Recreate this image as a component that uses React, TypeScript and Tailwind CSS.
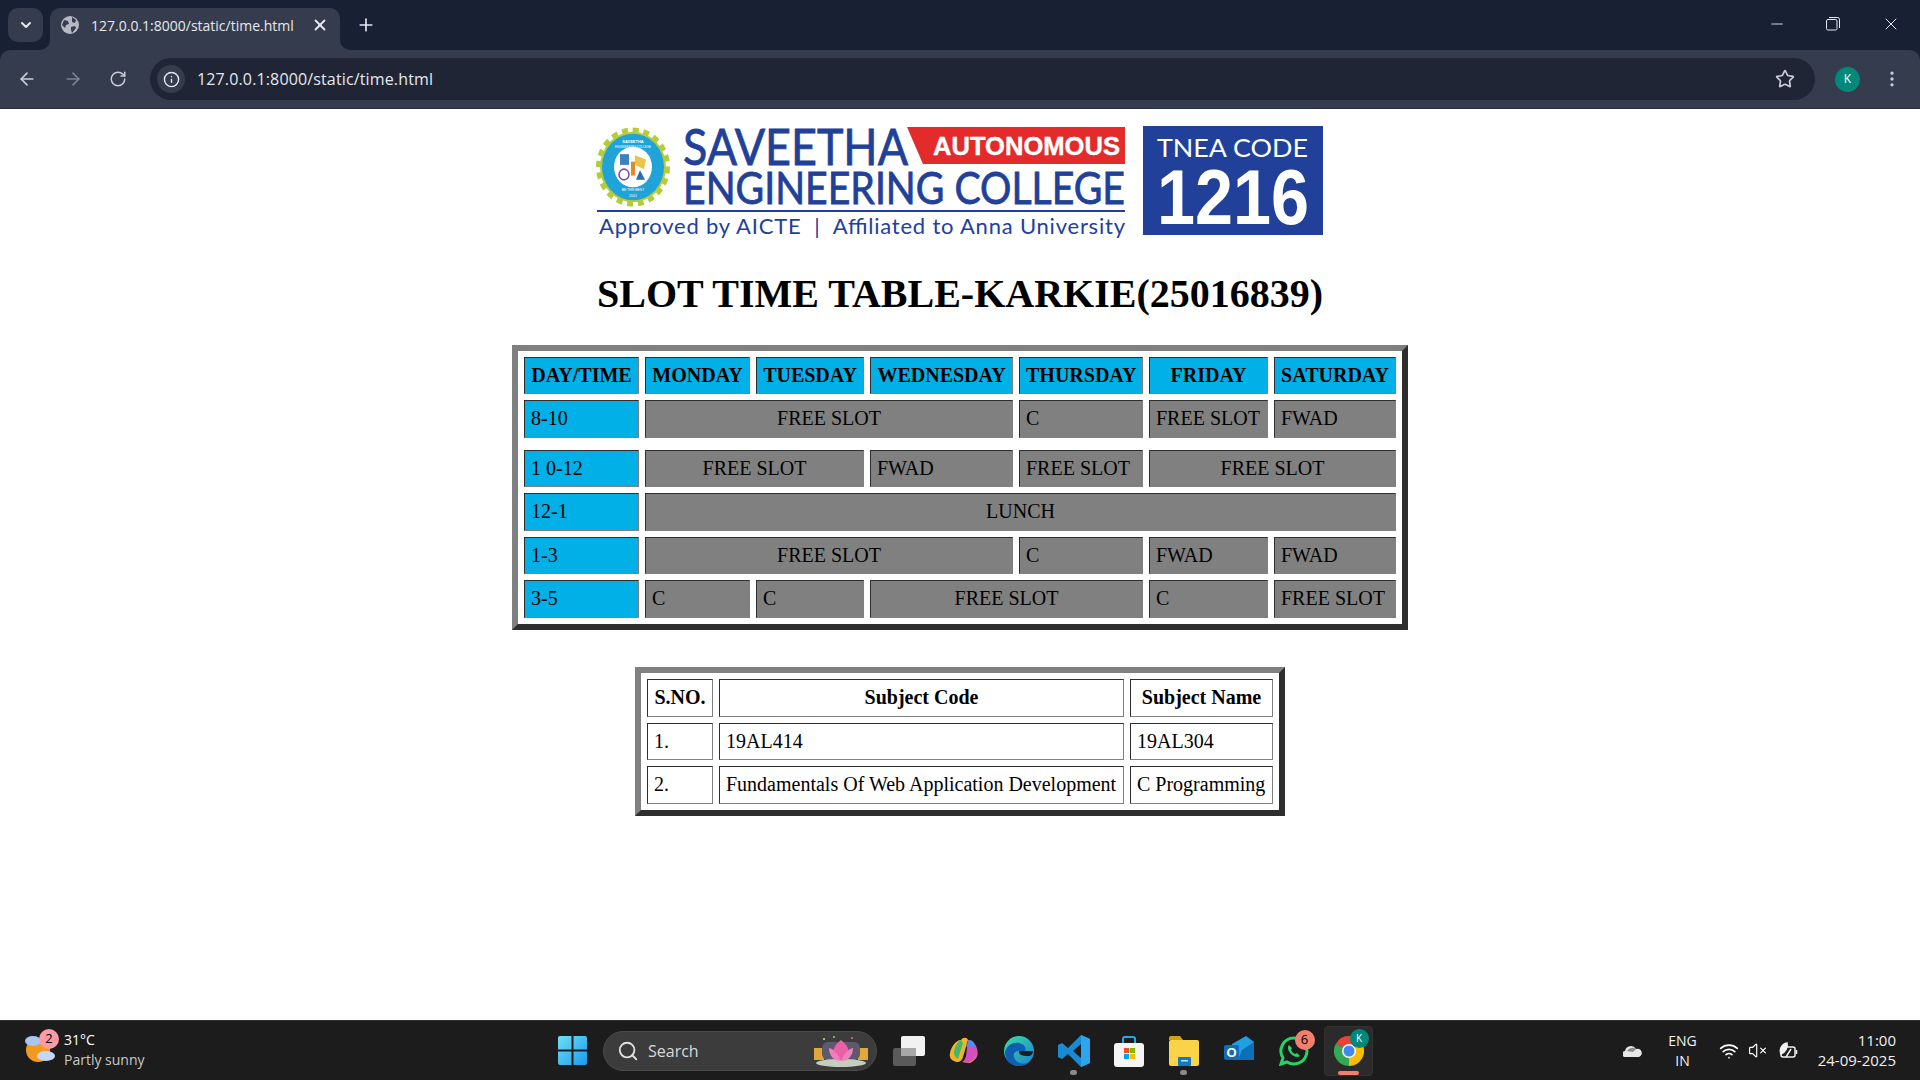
import { ArrowLeft, ArrowRight, ChevronDown, EllipsisVertical, Info, Minus, Plus, RotateCw, Search, Star, VolumeX, Wifi, X } from "lucide-react";
import { Fragment } from "react";
import type { ReactNode } from "react";

type Cell = { t: string; span?: number };
const rows: { label: string; cells: Cell[]; h: string }[] = [
  { label: "8-10", h: "h-[38px]", cells: [{ t: "FREE SLOT", span: 3 }, { t: "C" }, { t: "FREE SLOT" }, { t: "FWAD" }] },
  { label: "1 0-12", h: "h-[37px]", cells: [{ t: "FREE SLOT", span: 2 }, { t: "FWAD" }, { t: "FREE SLOT" }, { t: "FREE SLOT", span: 2 }] },
  { label: "12-1", h: "h-[38px]", cells: [{ t: "LUNCH", span: 6 }] },
  { label: "1-3", h: "h-[37px]", cells: [{ t: "FREE SLOT", span: 3 }, { t: "C" }, { t: "FWAD" }, { t: "FWAD" }] },
  { label: "3-5", h: "h-[38px]", cells: [{ t: "C" }, { t: "C" }, { t: "FREE SLOT", span: 2 }, { t: "C" }, { t: "FREE SLOT" }] },
];
const heads = ["DAY/TIME", "MONDAY", "TUESDAY", "WEDNESDAY", "THURSDAY", "FRIDAY", "SATURDAY"];
const cellBorder = "border border-t-[#2e2e2e] border-l-[#2e2e2e] border-r-[#808080] border-b-[#808080] px-[6px] pt-0 pb-[2px]";
const tableBorder = "border-[6px] border-t-[#808080] border-l-[#808080] border-r-[#2e2e2e] border-b-[#2e2e2e] border-separate border-spacing-[6px] table-fixed";

function Logo() {
  const blue = "#21409a";
  return (
    <svg width="730" height="118" viewBox="595 123 730 118" className="block">
      <g transform="translate(633 167) scale(1 1.07) translate(-633 -167)">
        <circle cx="633" cy="167" r="33" fill="#b5cc3a" />
        <circle cx="633" cy="167" r="34.500" fill="none" stroke="#b5cc3a" strokeWidth="5" strokeDasharray="6 4.800" />
        <circle cx="633" cy="167" r="31" fill="#1fa3d8" />
        <circle cx="633" cy="167" r="19" fill="#ffffff" />
        <rect x="620" y="155" width="9" height="10" fill="#3f7fc4" />
        <path d="M635 156l11 4-2 9-9-4z" fill="#e8c547" />
        <circle cx="624" cy="174" r="5" fill="none" stroke="#7a4ea3" strokeWidth="1.500" />
        <path d="M640 170l5 9h-9z" fill="#2b6cb0" />
        <rect x="631" y="162" width="4" height="13" fill="#e08a2b" />
      </g>
      <text x="633" y="143" textAnchor="middle" fontFamily="Liberation Sans" fontWeight="700" fontSize="4" fill="#ffffff">SAVEETHA</text>
      <text x="633" y="148" textAnchor="middle" fontFamily="Liberation Sans" fontSize="3" fill="#ffffff">ENGINEERING COLLEGE</text>
      <text x="633" y="191" textAnchor="middle" fontFamily="Liberation Sans" fontSize="3.500" fill="#ffffff">BE THE BEST</text>
      <text x="633" y="197" textAnchor="middle" fontFamily="Liberation Sans" fontSize="3.500" fill="#ffffff">2001</text>
      <text x="683" y="165" fontFamily="Lato" fontSize="50" fill={blue} stroke={blue} strokeWidth="0.8" textLength="225" lengthAdjust="spacingAndGlyphs">SAVEETHA</text>
      <polygon points="907,127 1125,127 1125,164 923,164" fill="#e32b2b" />
      <text x="933" y="155" fontFamily="Liberation Sans" fontWeight="700" fontSize="25" fill="#ffffff" stroke="#ffffff" strokeWidth="0.4" textLength="187" lengthAdjust="spacingAndGlyphs">AUTONOMOUS</text>
      <text x="683" y="204" fontFamily="Lato" fontSize="44" fill={blue} stroke={blue} strokeWidth="0.8" textLength="442" lengthAdjust="spacingAndGlyphs">ENGINEERING COLLEGE</text>
      <rect x="597" y="210" width="528" height="2" fill={blue} />
      <text x="599" y="234" fontFamily="Lato" fontSize="22" fill={blue} textLength="526" lengthAdjust="spacing" className="whitespace-pre">Approved by AICTE  |  Affiliated to Anna University</text>
      <rect x="1143" y="126" width="180" height="109" fill={blue} />
      <text x="1157" y="157" fontFamily="Lato" fontSize="25" fill="#ffffff" textLength="151" lengthAdjust="spacingAndGlyphs">TNEA CODE</text>
      <text x="1157" y="224" fontFamily="Liberation Sans" fontWeight="700" fontSize="78" fill="#ffffff" textLength="152" lengthAdjust="spacingAndGlyphs">1216</text>
    </svg>
  );
}

function TaskIcon({ children, dot, active }: { children: ReactNode; dot?: boolean; active?: boolean }) {
  return (
    <div className="relative w-[55px] h-[50px] flex items-center justify-center">
      {active && <span className="absolute inset-y-0 left-[3px] right-[3px] rounded bg-[#2b2b2b] border border-[#333333]" />}
      <span className="relative flex">{children}</span>
      {dot && <span className="absolute bottom-[1px] left-[24px] w-[7px] h-[5px] rounded-full bg-[#8a8a8a]" />}
      {active && <span className="absolute bottom-[1px] left-[17px] w-[21px] h-[4px] rounded-full bg-[#f0806e]" />}
    </div>
  );
}

function Badge({ n, cls }: { n: string; cls: string }) {
  return <span className={`absolute flex items-center justify-center rounded-full text-black text-[13px] ${cls}`}>{n}</span>;
}

export default function App() {
  return (
    <div className="w-[1920px] h-[1080px] flex flex-col overflow-hidden bg-white font-['Open_Sans',sans-serif]">
      <div className="bg-[#172133] shrink-0">
        <div className="h-[50px] flex items-end relative">
          <div className="absolute left-[8px] top-[8px] w-[35px] h-[34px] rounded-[10px] bg-[#353c4d] flex items-center justify-center text-[#e6e8ee]">
            <ChevronDown size={16} strokeWidth={3} />
          </div>
          <svg width="10" height="10" viewBox="0 0 10 10" className="absolute left-[40px] top-[40px]"><path d="M10 0A10 10 0 0 1 0 10H10Z" fill="#353c4d" /></svg>
          <svg width="10" height="10" viewBox="0 0 10 10" className="absolute left-[340px] top-[40px]"><path d="M0 0A10 10 0 0 0 10 10H0Z" fill="#353c4d" /></svg>
          <div className="ml-[50px] w-[290px] h-[42px] rounded-t-[10px] bg-[#353c4d] flex items-center pl-[11px] pb-[8px] text-[#e6e8ee]">
            <svg width="18" height="18" viewBox="0 0 18 18" className="shrink-0">
              <circle cx="9" cy="9" r="9" fill="#b5b9c4" />
              <path d="M3 4l4 1 1 3-3 1-1 3-3-3zM11 1l4 3-1 3-3-1zM10 11l4-1 1 2-4 5-1-3z" fill="#353c4d" />
            </svg>
            <span className="ml-[12px] text-[14px] w-[205px] whitespace-nowrap">127.0.0.1:8000/static/time.html</span>
            <X size={18} strokeWidth={2.5} className="ml-[15px]" />
          </div>
          <Plus size={20} className="ml-[16px] mb-[15px] text-[#e6e8ee]" />
          <div className="ml-auto flex items-center h-full text-[#e6e8ee] pb-[3px]">
            <Minus size={18} strokeWidth={1.2} className="mr-[40px]" />
            <svg width="14" height="14" viewBox="0 0 14 14" fill="none" stroke="currentColor" className="mr-[41px]">
              <rect x="0.5" y="2.5" width="10.5" height="10.5" rx="1.5" />
              <path d="M3 .5h8.5a2 2 0 0 1 2 2V11" />
            </svg>
            <X size={20} strokeWidth={1.2} className="mr-[19px]" />
          </div>
        </div>

        <div className="h-[59px] bg-[#353c4d] rounded-t-[10px] flex items-center text-[#c9cdd8] border-b border-[#2a3040]">
          <ArrowLeft size={20} className="ml-[17px]" />
          <ArrowRight size={20} className="ml-[26px] text-[#7d8290]" />
          <RotateCw size={18} className="ml-[26px]" />
          <div className="ml-[23px] w-[1665px] h-[42px] rounded-full bg-[#1f2535] flex items-center pl-[7px]">
            <div className="w-[28px] h-[28px] rounded-full bg-[#353c4d] flex items-center justify-center text-[#e6e8ee]">
              <Info size={17} />
            </div>
            <span className="ml-[12px] text-[16px] text-[#e6e8ee] tracking-[0.14px] whitespace-nowrap">127.0.0.1:8000/static/time.html</span>
            <Star size={20} className="ml-auto mr-[20px]" />
          </div>
          <div className="ml-[20px] w-[25px] h-[25px] rounded-full bg-[#00897b] text-white text-[12px] flex items-center justify-center">K</div>
          <EllipsisVertical size={20} className="ml-[22px] text-[#c5cbe0]" />
        </div>
      </div>

      <main className="flex-1 flex flex-col items-center pt-[14px] font-['Liberation_Serif',serif] text-black text-[20px]">
        <Logo />
        <h1 className="mt-[30px] text-[40px] leading-[46px] font-bold whitespace-nowrap">SLOT TIME TABLE-KARKIE(25016839)</h1>
        <table className={`mt-[28px] w-[896px] ${tableBorder}`}>
          <colgroup>
            <col className="w-[115px]" /><col className="w-[105px]" /><col className="w-[108px]" /><col className="w-[143px]" /><col className="w-[124px]" /><col className="w-[119px]" /><col className="w-[122px]" />
          </colgroup>
          <tbody>
            <tr className="h-[37px]">
              {heads.map((h) => (
                <th key={h} className={`${cellBorder} bg-[#00b0e6] font-bold text-center whitespace-nowrap`}>{h}</th>
              ))}
            </tr>
            {rows.map((r, i) => (
              <Fragment key={r.label}>
                {i === 1 && (
                  <tr>
                    <td colSpan={7} className="p-0 h-0" />
                  </tr>
                )}
                <tr className={r.h}>
                  <td className={`${cellBorder} bg-[#00b0e6] whitespace-nowrap`}>{r.label}</td>
                  {r.cells.map((c, j) => (
                    <td key={j} colSpan={c.span} className={`${cellBorder} bg-[#808080] whitespace-nowrap ${c.span ? "text-center" : "text-left"}`}>{c.t}</td>
                  ))}
                </tr>
              </Fragment>
            ))}
          </tbody>
        </table>
        <table className={`mt-[37px] w-[650px] ${tableBorder}`}>
          <colgroup>
            <col className="w-[66px]" /><col className="w-[405px]" /><col className="w-[143px]" />
          </colgroup>
          <tbody>
            <tr className="h-[38px]">
              <th className={`${cellBorder} font-bold text-center`}>S.NO.</th>
              <th className={`${cellBorder} font-bold text-center`}>Subject Code</th>
              <th className={`${cellBorder} font-bold text-center`}>Subject Name</th>
            </tr>
            <tr className="h-[37px]">
              <td className={cellBorder}>1.</td>
              <td className={cellBorder}>19AL414</td>
              <td className={cellBorder}>19AL304</td>
            </tr>
            <tr className="h-[38px]">
              <td className={cellBorder}>2.</td>
              <td className={`${cellBorder} whitespace-nowrap`}>Fundamentals Of Web Application Development</td>
              <td className={`${cellBorder} whitespace-nowrap`}>C Programming</td>
            </tr>
          </tbody>
        </table>
      </main>

      <div className="h-[60px] shrink-0 bg-[#1c1c1c] border-t border-[#2f2f2f] flex items-center text-white">
        <div className="w-[558px] shrink-0 flex items-center pl-[24px]">
          <div className="relative w-[32px] h-[36px]">
            <svg width="32" height="36" viewBox="0 0 32 36">
              <circle cx="14" cy="17" r="12" fill="#f29a1f" />
              <ellipse cx="9" cy="8" rx="8" ry="5" fill="#a9c6ee" />
              <ellipse cx="22" cy="23" rx="9" ry="5" fill="#c3d8f5" />
            </svg>
            <Badge n="2" cls="left-[15px] top-[-4px] w-[20px] h-[20px] bg-[#ff99a4]" />
          </div>
          <div className="ml-[8px] leading-[20px] -mt-[2px]">
            <div className="text-[14px]">31°C</div>
            <div className="text-[14px] text-[#c8c8c8]">Partly sunny</div>
          </div>
        </div>
        <svg width="29" height="29" viewBox="0 0 29 29" className="shrink-0">
          <defs>
            <linearGradient id="win" x1="0" y1="0" x2="1" y2="1">
              <stop offset="0" stopColor="#6ee0f7" />
              <stop offset="1" stopColor="#1a9bea" />
            </linearGradient>
          </defs>
          <path d="M0 2a2 2 0 0 1 2-2h11.5v13.5H0zM15.500 0H27a2 2 0 0 1 2 2v11.500H15.500zM0 15.500h13.500V29H2a2 2 0 0 1-2-2zM15.500 15.500H29V27a2 2 0 0 1-2 2H15.500z" fill="url(#win)" />
        </svg>
        <div className="ml-[16px] w-[274px] h-[40px] rounded-full bg-[#3c3c3c] border border-[#4a4a4a] flex items-center pl-[13px] shrink-0">
          <Search size={22} className="text-[#e0e0e0]" />
          <span className="ml-[9px] text-[16px] text-[#d8d8d8]">Search</span>
          <svg width="58" height="34" viewBox="0 0 58 34" className="ml-auto mr-[6px]">
            <rect x="2" y="14" width="10" height="12" fill="#e0a93a" />
            <rect x="46" y="14" width="10" height="12" fill="#e0a93a" />
            <rect x="10" y="8" width="38" height="18" rx="6" fill="#5d5a70" />
            <ellipse cx="29" cy="29" rx="25" ry="4" fill="#c7cdbd" />
            <path d="M29 6c7 5 9 11 7 18-3 3-11 3-14 0-2-7 0-13 7-18z" fill="#ea5fa5" />
            <path d="M17 14c5 1 9 6 12 13-6 0-12-4-12-13zM41 14c-5 1-9 6-12 13 6 0 12-4 12-13z" fill="#f07fbe" />
            <circle cx="12" cy="5" r="1" fill="#f6d65b" /><circle cx="22" cy="3" r="1" fill="#7dd87a" /><circle cx="40" cy="4" r="1" fill="#f07070" />
          </svg>
        </div>
        <div className="ml-[4px] flex items-center">
          <TaskIcon>
            <svg width="32" height="30" viewBox="0 0 32 30">
              <rect x="0" y="12" width="23" height="18" rx="2" fill="#5a5a5a" />
              <rect x="8" y="0" width="24" height="20" rx="2" fill="#f2f2f2" />
              <rect x="8" y="12" width="15" height="8" fill="#a8a8a8" />
            </svg>
          </TaskIcon>
          <TaskIcon>
            <svg width="30" height="30" viewBox="0 0 30 30" fill="none">
              <path d="M12 4c2-3 6-3 7 0l-5 17c-1 5-6 6-9 4-3-1-5-4-4-8 1-6 6-13 11-13z" fill="#f0b429" />
              <path d="M12 4c-4 2-7 8-7 13 0 3 2 5 4 6L14 7z" fill="#46b66d" />
              <path d="M19 4c4 0 6 2 8 6 3 7 2 12-3 15-3 2-8 2-11 1 2-1 3-3 4-6z" fill="#d34fc0" />
              <path d="M20 4c4 0 6 4 7 8-3-2-6-2-10-1z" fill="#4b8df0" />
              <path d="M13 26c6 1 11-1 13-5l2-6c0 5-3 12-8 12z" fill="#f0705f" />
            </svg>
          </TaskIcon>
          <TaskIcon>
            <svg width="30" height="30" viewBox="0 0 30 30">
              <defs>
                <linearGradient id="edge" x1="0" y1="0" x2="1" y2="1">
                  <stop offset="0" stopColor="#3be09c" />
                  <stop offset="1" stopColor="#1a7fd4" />
                </linearGradient>
              </defs>
              <circle cx="15" cy="15" r="15" fill="url(#edge)" />
              <path d="M1 16c2-7 8-10 14-9 5 1 8 5 6 8h-6c-4 0-6 3-5 6 1 5 7 8 14 6-5 4-12 4-17 1-4-2-6-7-6-12z" fill="#0f5fb0" />
              <path d="M15 15h14c0 3-2 5-5 5-5 0-10-1-9-5z" fill="#1c1c1c" />
            </svg>
          </TaskIcon>
          <TaskIcon dot>
            <svg width="32" height="32" viewBox="0 0 32 32">
              <path d="M23 0l9 4v24l-9 4L10 19l-6 5-4-2V10l4-2 6 5zM23 9l-8 7 8 7z" fill="#1a8ad4" fillRule="evenodd" />
              <path d="M23 0l9 4v24l-9 4z" fill="#2aa6ee" />
            </svg>
          </TaskIcon>
          <TaskIcon>
            <svg width="30" height="32" viewBox="0 0 30 32">
              <path d="M9 8V4a2 2 0 0 1 2-2h8a2 2 0 0 1 2 2v4" fill="none" stroke="#27a9e0" strokeWidth="2" />
              <rect x="0" y="8" width="30" height="24" rx="3" fill="#f5f5f5" />
              <rect x="10" y="13" width="5" height="5" fill="#f25022" />
              <rect x="16" y="13" width="5" height="5" fill="#7fba00" />
              <rect x="10" y="19" width="5" height="5" fill="#00a4ef" />
              <rect x="16" y="19" width="5" height="5" fill="#ffb900" />
            </svg>
          </TaskIcon>
          <TaskIcon dot>
            <svg width="30" height="30" viewBox="0 0 30 30">
              <path d="M0 2a2 2 0 0 1 2-2h9l3 4h-14z" fill="#d39f15" />
              <rect x="0" y="4" width="30" height="26" rx="2" fill="#fbd348" />
              <rect x="9" y="21" width="13" height="9" rx="1" fill="#1278c8" />
              <rect x="12" y="24" width="7" height="1.500" fill="#bfe3fa" />
            </svg>
          </TaskIcon>
          <TaskIcon>
            <svg width="30" height="30" viewBox="0 0 30 30">
              <path d="M8 8l14-8 8 6v18H8z" fill="#1fa0e3" />
              <path d="M18 14l12-8v18H14z" fill="#0d6fb8" />
              <rect x="0" y="9" width="15" height="15" rx="2" fill="#0f6cbd" />
              <text x="7.500" y="21" textAnchor="middle" fontFamily="Liberation Sans" fontWeight="700" fontSize="13" fill="#ffffff">O</text>
            </svg>
          </TaskIcon>
          <TaskIcon>
            <svg width="30" height="30" viewBox="0 0 30 30" fill="none">
              <path d="M15 2a13 13 0 0 0-11 20l-2 6 6-2a13 13 0 1 0 7-24z" stroke="#25d366" strokeWidth="3" />
              <path d="M10 9c-2 2-1 6 2 9s7 4 9 2l-3-3-2 1c-2-1-3-2-4-4l1-2z" fill="#25d366" />
            </svg>
            <Badge n="6" cls="left-[16px] top-[-6px] w-[20px] h-[20px] bg-[#f0806e]" />
          </TaskIcon>
          <TaskIcon active>
            <svg width="30" height="30" viewBox="0 0 30 30">
              <path d="M15 15L2 7.500A15 15 0 0 1 28 7.500z" fill="#ea4335" />
              <path d="M15 15L28 7.500A15 15 0 0 1 15 30z" fill="#fbbc04" />
              <path d="M15 15L15 30A15 15 0 0 1 2 7.500z" fill="#34a853" />
              <circle cx="15" cy="15" r="7" fill="#ffffff" />
              <circle cx="15" cy="15" r="5.500" fill="#4285f4" />
            </svg>
            <span className="absolute left-[16px] top-[-7px] w-[19px] h-[19px] rounded-full bg-[#00897b] text-[10px] text-white flex items-center justify-center">K</span>
          </TaskIcon>
        </div>
        <div className="ml-auto flex items-center pr-[24px]">
          <svg width="20" height="12" viewBox="0 0 20 12" className="mr-[25px]">
            <path d="M3 12a3 3 0 0 1-1-6 6 6 0 0 1 11-2 4 4 0 0 1 3 8z" fill="#e8e8e8" />
            <path d="M4 6a6 6 0 0 1 9-2l-3 3z" fill="#8c8c8c" />
          </svg>
          <div className="text-[14px] leading-[20px] text-center text-[#f0f0f0]">
            <div>ENG</div>
            <div>IN</div>
          </div>
          <Wifi size={20} className="ml-[22px]" />
          <VolumeX size={19} strokeWidth={1.5} className="ml-[9px]" />
          <svg width="20" height="20" viewBox="0 0 20 20" fill="none" stroke="#f0f0f0" strokeWidth="1.5" className="ml-[11px]">
            <rect x="3" y="6" width="14" height="10" rx="2" />
            <path d="M18.500 9v4" />
            <path d="M3 13c-2-5 1-10 6-11 1 4-1 9-6 11z" fill="#f0f0f0" />
            <path d="M8 16l5-8" />
          </svg>
          <div className="ml-[20px] text-[15px] leading-[20px] text-right text-[#f0f0f0] -mt-[2px]">
            <div>11:00</div>
            <div>24-09-2025</div>
          </div>
        </div>
      </div>
    </div>
  );
}
